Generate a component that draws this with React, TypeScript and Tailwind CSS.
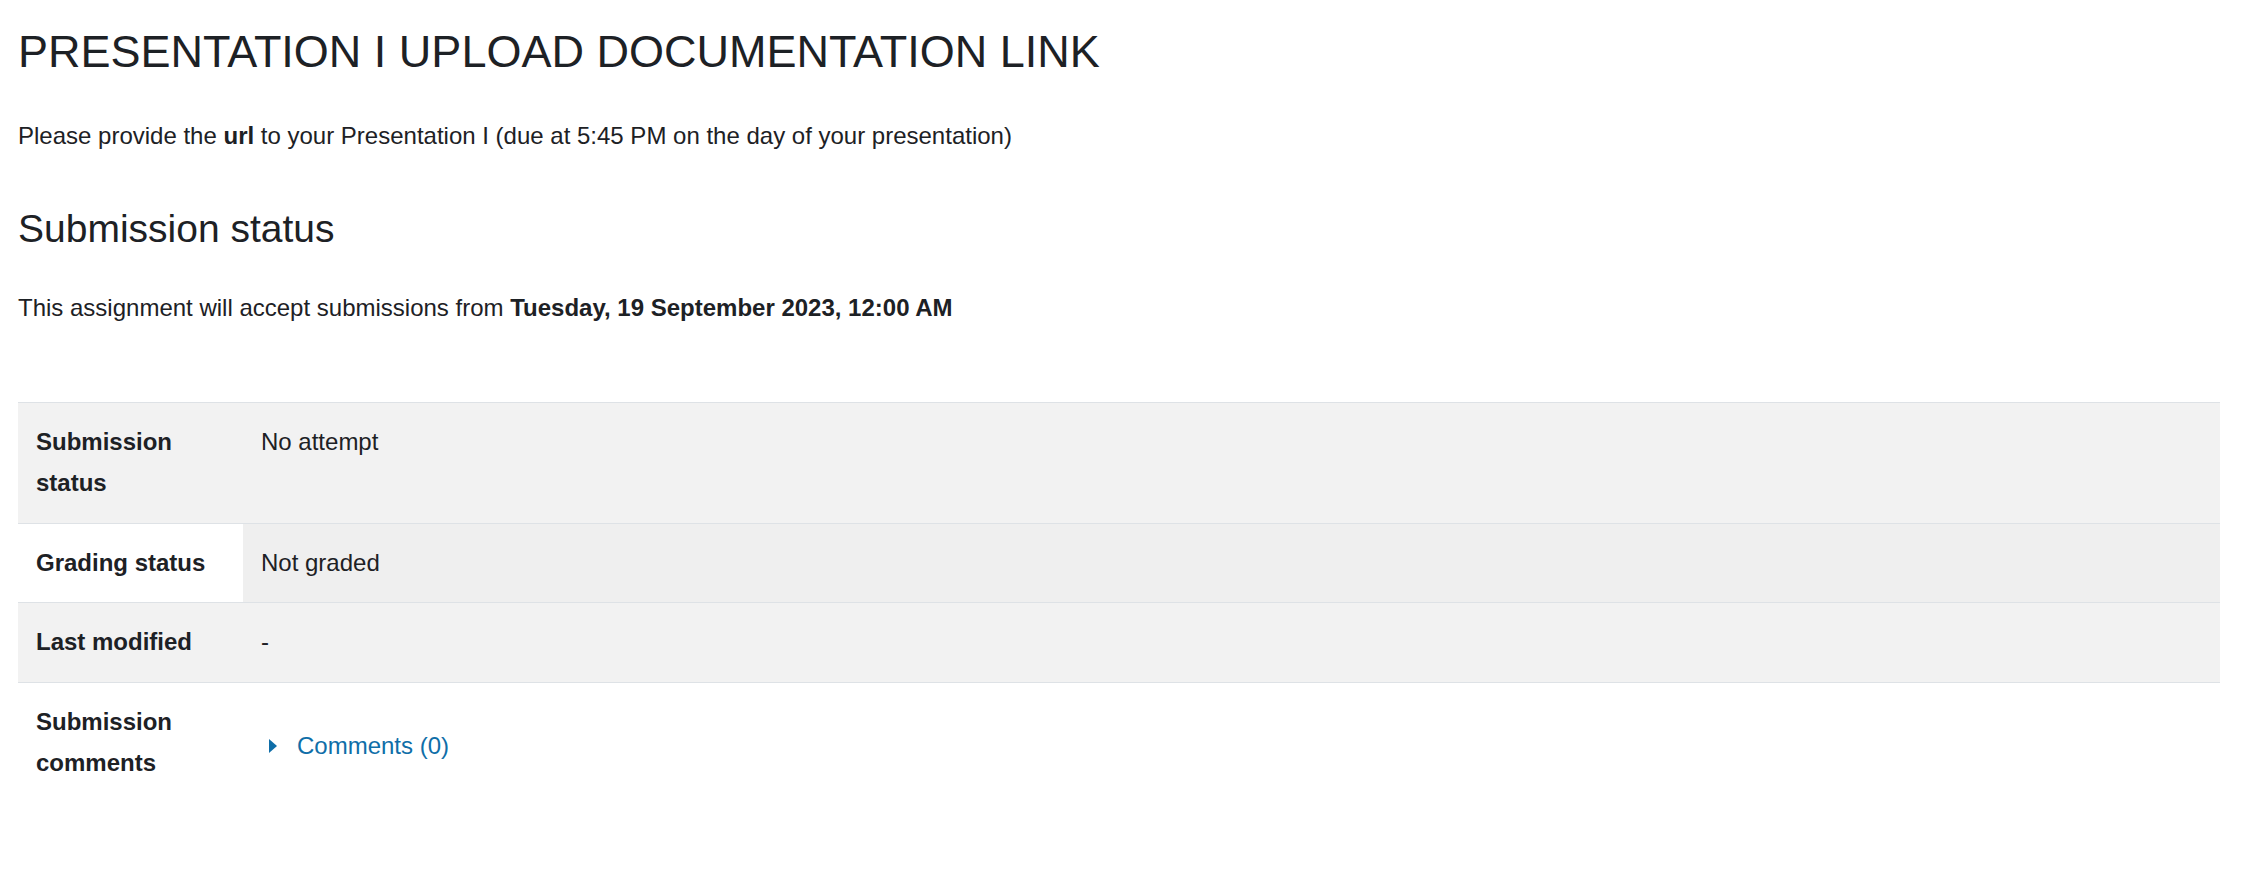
import React from "react";

const rows = [
  { label: ["Submission", "status"], value: "No attempt", rowBg: "bg-[#f2f2f2]", valBg: "bg-[#f2f2f2]" },
  { label: ["Grading status"], value: "Not graded", rowBg: "bg-white", valBg: "bg-[#efefef]" },
  { label: ["Last modified"], value: "-", rowBg: "bg-[#f2f2f2]", valBg: "bg-[#f2f2f2]" },
];

export default function App() {
  return (
    <div
      className="min-h-screen bg-white pl-[18px] pr-[21px] pt-[25px] text-[#1d2125]"
      style={{ fontFamily: '"Liberation Sans", Arial, sans-serif' }}
    >
      <h2 className="text-[45px] leading-[53px] font-normal">PRESENTATION I UPLOAD DOCUMENTATION LINK</h2>
      <p className="mt-[40px] text-[24px] leading-[36px]">
        Please provide the <strong className="font-bold">url</strong> to your Presentation I (due at 5:45 PM on the day of your presentation)
      </p>
      <h3 className="mt-[51px] text-[39px] leading-[47px] font-normal">Submission status</h3>
      <p className="mt-[38px] text-[24px] leading-[36px]">
        This assignment will accept submissions from{" "}
        <strong className="font-bold">Tuesday, 19 September 2023, 12:00 AM</strong>
      </p>
      <table className="mt-[76px] w-full border-collapse text-[24px] leading-[40.8px]">
        <tbody>
          {rows.map((r, i) => (
            <tr key={i} className={`border-t border-[#dee2e6] ${r.rowBg}`}>
              <th className="w-[225px] px-[18px] py-[19px] text-left align-top font-bold">
                {r.label.map((l, j) => (
                  <div key={j}>{l}</div>
                ))}
              </th>
              <td className={`px-[18px] py-[19px] align-top ${r.valBg}`}>{r.value}</td>
            </tr>
          ))}
          <tr className="border-t border-[#dee2e6] bg-white">
            <th className="w-[225px] px-[18px] py-[19px] text-left align-top font-bold">
              <div>Submission</div>
              <div>comments</div>
            </th>
            <td className="px-[18px] py-[19px] align-middle">
              <div className="flex items-center pt-[6px]">
                <svg width="8" height="14" viewBox="0 0 8 14" className="ml-[8px] mr-[20px]">
                  <polygon points="0,0 8,7 0,14" fill="#0f6ea8" />
                </svg>
                <a className="text-[#0f6ea8]">Comments (0)</a>
              </div>
            </td>
          </tr>
        </tbody>
      </table>
    </div>
  );
}
